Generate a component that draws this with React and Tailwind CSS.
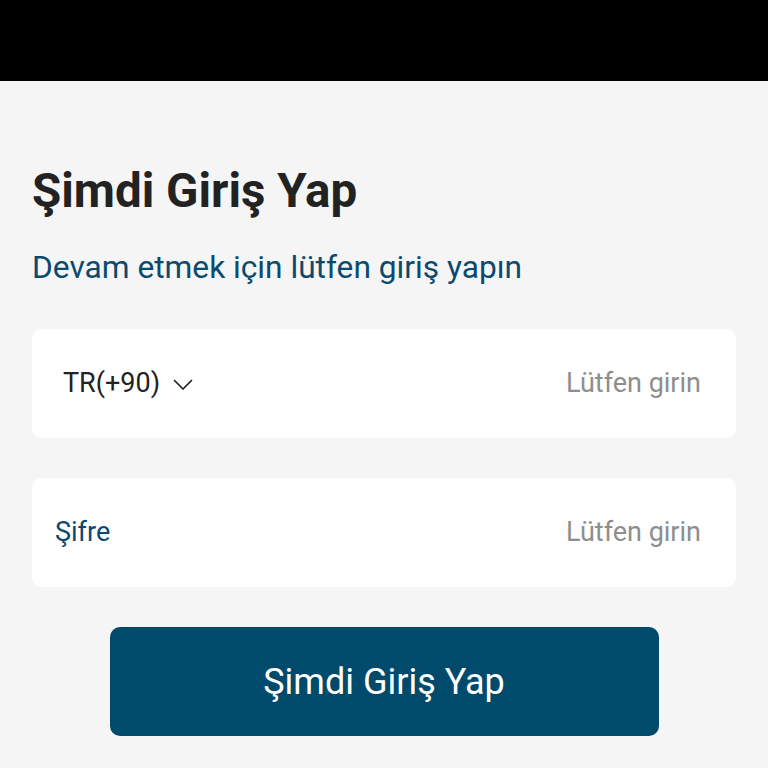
import React from "react";

const Chevron = () => (
  <svg width="20" height="12" viewBox="0 0 20 12" fill="none" stroke="#222" strokeWidth="1.7" strokeLinecap="round" strokeLinejoin="round" className="mt-[2px]">
    <path d="M1.5 1.5l8.5 8.5 8.5-8.5" />
  </svg>
);

const App = () => {
  return (
    <div className="min-h-[768px] bg-[#f5f5f5] font-['Roboto',sans-serif]">
      <div className="h-[81px] bg-black" />
      <div className="px-[32px]">
        <h1 className="mt-[82px] text-[47.5px] leading-[56px] font-bold text-[#222222]">
          Şimdi Giriş Yap
        </h1>
        <p className="mt-[29px] text-[31.7px] leading-[40px] text-[#0b4a6e]">
          Devam etmek için lütfen giriş yapın
        </p>
        <div className="mt-[41px] flex h-[109px] items-center justify-between rounded-[10px] bg-white pl-[31px] pr-[35px]">
          <div className="flex items-center gap-[13px] text-[27px] text-[#222222]">
            <span>TR(+90)</span>
            <Chevron />
          </div>
          <span className="text-[27px] text-[#8e8e8e]">Lütfen girin</span>
        </div>
        <div className="mt-[40px] flex h-[109px] items-center justify-between rounded-[10px] bg-white pl-[23px] pr-[35px]">
          <span className="text-[27px] text-[#0b4a6e]">Şifre</span>
          <span className="text-[27px] text-[#8e8e8e]">Lütfen girin</span>
        </div>
        <div className="mt-[40px] flex justify-center">
          <button className="flex h-[109px] w-[549px] items-center justify-center rounded-[10px] bg-[#004a6b] text-[36px] text-white">
            Şimdi Giriş Yap
          </button>
        </div>
      </div>
    </div>
  );
};

export default App;
